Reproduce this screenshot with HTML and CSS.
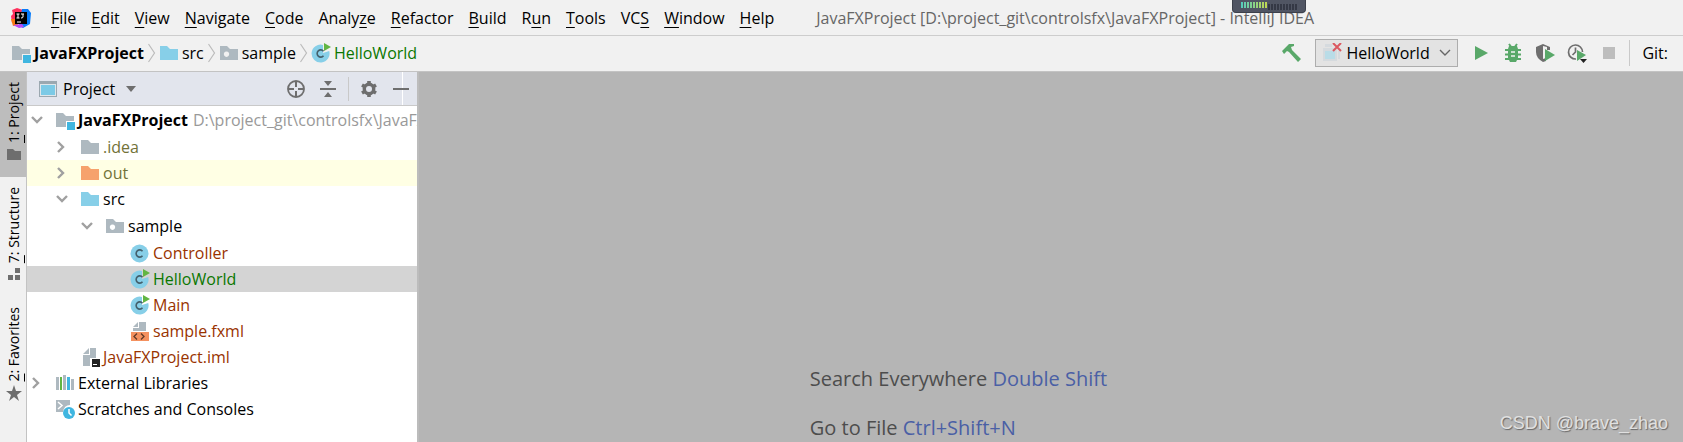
FILE: index.html
```html
<!DOCTYPE html>
<html lang="en">
<head>
    <meta charset="utf-8">
    <title>JavaFXProject - IntelliJ IDEA</title>
    <link rel="stylesheet" href="styles.css">
</head>
<body>
    <!-- shared icons -->
    <svg class="defs" aria-hidden="true">
        <symbol id="folder" viewBox="0 0 20 20"><path d="M1 3h7l3 3h8v11H1z"/></symbol>
        <symbol id="module" viewBox="0 0 20 20">
            <path fill="#aeb9c0" d="M1 3h7l3 3h8v5h-8v6H1z"/>
            <path fill="#40b6e0" d="M12 12h8v8h-8z"/>
        </symbol>
        <symbol id="package" viewBox="0 0 20 20">
            <path fill="#aeb9c0" fill-rule="evenodd" d="M1 3h7l3 3h8v11H1zM7.500 8.500a2.700 2.700 0 1 0 .01 0z"/>
        </symbol>
        <symbol id="class" viewBox="0 0 20 20">
            <circle cx="9.500" cy="10.500" r="9" fill="#87cfe8"/>
            <path d="M12.500 8.200A3.600 3.600 0 1 0 12.500 12.800" fill="none" stroke="#44606c" stroke-width="1.600"/>
        </symbol>
        <symbol id="runclass" viewBox="0 0 20 20">
            <path fill="#87cfe8" d="M12 1.900A9 9 0 1 0 18.200 8L12 10z"/>
            <path d="M12.500 8.200A3.600 3.600 0 1 0 12.500 12.800" fill="none" stroke="#44606c" stroke-width="1.600"/>
            <path fill="#62b543" d="M13 0l7 4-7 4z"/>
        </symbol>
        <symbol id="crumb" viewBox="0 0 8 20"><path d="M1 1l6 9-6 9" fill="none" stroke="#bcbcbc" stroke-width="1.200"/></symbol>
        <symbol id="open" viewBox="0 0 12 12"><path d="M1 3l5 5 5-5" fill="none" stroke="#a0a0a0" stroke-width="2.400"/></symbol>
        <symbol id="closed" viewBox="0 0 12 12"><path d="M2 1l5 5-5 5" fill="none" stroke="#a0a0a0" stroke-width="2.400"/></symbol>
    </svg>

    <header class="menubar">
        <svg class="logo" viewBox="0 0 20 20">
            <path fill="#fe315d" d="M1 2l5-2 6 2-4 8-7 5-1-7 2-2z"/>
            <path fill="#f97a12" d="M0 11l5 0 2 6-5 1z"/>
            <path fill="#087cfa" d="M11 1l6 0 3 4-1 11-7 4-4-2z"/>
            <path fill="#b74af7" d="M2 17l9-1 2 3-5 1z"/>
            <path d="M4 4h12v12H4z"/>
            <path d="M5.500 6h3M7 6v4M5.500 10h3M10 6h3M12 6v3q0 1-2 1M6 14h4" fill="none" stroke="#fff"/>
        </svg>
        <nav class="menu">
            <button><u>F</u>ile</button>
            <button><u>E</u>dit</button>
            <button><u>V</u>iew</button>
            <button><u>N</u>avigate</button>
            <button><u>C</u>ode</button>
            <button>Analy<u>z</u>e</button>
            <button><u>R</u>efactor</button>
            <button><u>B</u>uild</button>
            <button>R<u>u</u>n</button>
            <button><u>T</u>ools</button>
            <button>VC<u>S</u></button>
            <button><u>W</u>indow</button>
            <button><u>H</u>elp</button>
        </nav>
        <span class="window-title">JavaFXProject [D:\project_git\controlsfx\JavaFXProject] - IntelliJ IDEA</span>
        <div class="meter"><span class="level"></span><span class="rest"></span></div>
    </header>

    <div class="navbar">
        <div class="crumbs">
            <svg class="icon"><use href="#module"/></svg><b>JavaFXProject</b>
            <svg class="sep"><use href="#crumb"/></svg>
            <svg class="icon source"><use href="#folder"/></svg><span>src</span>
            <svg class="sep"><use href="#crumb"/></svg>
            <svg class="icon"><use href="#package"/></svg><span>sample</span>
            <svg class="sep"><use href="#crumb"/></svg>
            <svg class="icon"><use href="#runclass"/></svg><span class="added">HelloWorld</span>
        </div>
        <div class="actions">
            <button aria-label="Build"><svg class="icon" viewBox="0 0 20 20"><path fill="#59a869" d="M0 8l7-7h5v2l-3 1 1 3 9 9-3 3-9-10-2-1-3 3z"/></svg></button>
            <div class="config">
                <svg class="icon" viewBox="0 0 20 20">
                    <path fill="#d5dade" d="M3 1h7v3H3zM16 8h2v8h-2zM1 5h14v13H1z"/>
                    <path fill="#b9dce7" d="M3 8h10v8H3z"/>
                    <path d="M11 0l8 8M19 0l-8 8" stroke="#db5860" stroke-width="2"/>
                </svg>
                <select aria-label="Run configuration"><option>HelloWorld</option></select>
                <svg class="chevron" viewBox="0 0 12 12"><path d="M1 3l5 5 5-5" fill="none" stroke="#666" stroke-width="1.400"/></svg>
            </div>
            <button aria-label="Run"><svg class="icon" viewBox="0 0 20 20"><path fill="#59a869" d="M4 3l13 7-13 7z"/></svg></button>
            <button aria-label="Debug"><svg class="icon" viewBox="0 0 20 20">
                <path d="M6 1l3 4M14 1l-3 4M2 7h16M2 11.500h16M2 16h16" stroke="#59a869" stroke-width="2" fill="none"/>
                <path fill="#59a869" d="M6 3h8l1 3v9l-2 4H7l-2-4V6z"/>
                <path d="M8 9h4M8 13h4" stroke="#f1f1f1" stroke-width="1.600"/>
            </svg></button>
            <button aria-label="Run with coverage"><svg class="icon" viewBox="0 0 20 20">
                <path fill="#6e6e6e" d="M1 4l7-3 7 3v3h-3V4L8 3v13l3-1v3l-3 1q-7-4-7-10z"/>
                <path fill="#59a869" d="M10 6l10 6-10 6z"/>
            </svg></button>
            <button aria-label="Profile"><svg class="icon" viewBox="0 0 20 20">
                <path d="M9 16A7 7 0 1 1 15.500 9M8.500 4.500V9l-3 3" fill="none" stroke="#6e6e6e" stroke-width="1.700"/>
                <path fill="#59a869" d="M10 7l9 5-9 6z"/>
                <path fill="#222" d="M13 16h7l-3.500 4z"/>
            </svg></button>
            <button aria-label="Stop" disabled><svg class="icon" viewBox="0 0 20 20"><path fill="#bdbdbd" d="M4 4h12v12H4z"/></svg></button>
            <span class="git">Git:</span>
        </div>
    </div>

    <div class="workspace">
        <aside class="stripe">
            <button class="tab active">
                <span><u>1</u>: Project</span>
                <svg viewBox="0 0 16 16"><path fill="#6e6e6e" d="M1 3h6l2 2h6v9H1z"/></svg>
            </button>
            <button class="tab">
                <span><u>7</u>: Structure</span>
                <svg viewBox="0 0 16 16"><path fill="#6e6e6e" d="M9 2h5v5H9zM2 9h5v5H2zM9 9h5v5H9z"/></svg>
            </button>
            <button class="tab">
                <span><u>2</u>: Favorites</span>
                <svg viewBox="0 0 16 16"><path fill="#6e6e6e" d="M8 0l2 6h6l-5 4 2 6-5-4-5 4 2-6-5-4h6z"/></svg>
            </button>
        </aside>

        <section class="project">
            <div class="panel-head">
                <svg class="icon" viewBox="0 0 20 20"><path fill="#9ba8b0" d="M1 2h18v16H1z"/><path fill="#dfe6ea" d="M2 5h16v12H2z"/><path fill="#7ccae6" d="M3 6h14v10H3z"/></svg>
                <button class="view">Project <svg viewBox="0 0 12 12"><path fill="#6e6e6e" d="M1 3h10L6 9z"/></svg></button>
                <div class="tools">
                    <button aria-label="Locate"><svg class="icon" viewBox="0 0 20 20"><circle cx="10" cy="10" r="8" fill="none" stroke="#6e6e6e" stroke-width="1.800"/><path d="M10 2v6M10 12v6M2 10h6M12 10h6" stroke="#6e6e6e" stroke-width="2"/></svg></button>
                    <button aria-label="Collapse all"><svg class="icon" viewBox="0 0 20 20"><path fill="#6e6e6e" d="M2 9h16v2H2zM6 2h8l-4 5zM6 18h8l-4-5z"/></svg></button>
                    <i class="divider"></i>
                    <button aria-label="Settings"><svg class="icon" viewBox="0 0 20 20"><circle cx="10" cy="10" r="4.700" fill="none" stroke="#6e6e6e" stroke-width="3.400"/><path d="M10 2v3M10 15v3M3 6l3 1.700M14 12.300l3 1.700M3 14l3-1.700M14 7.700L17 6" stroke="#6e6e6e" stroke-width="3.600"/></svg></button>
                    <button class="hide" aria-label="Hide"><svg class="icon" viewBox="0 0 20 20"><path fill="#6e6e6e" d="M2 9h16v2H2z"/></svg></button>
                </div>
            </div>

            <ul class="tree">
                <li>
                    <div class="row"><svg class="arrow"><use href="#open"/></svg><svg class="icon"><use href="#module"/></svg><b>JavaFXProject</b><span class="path">D:\project_git\controlsfx\JavaFXProject</span></div>
                    <ul>
                        <li><div class="row l1 ignored"><svg class="arrow"><use href="#closed"/></svg><svg class="icon plain"><use href="#folder"/></svg>.idea</div></li>
                        <li><div class="row l1 ignored excluded"><svg class="arrow"><use href="#closed"/></svg><svg class="icon orange"><use href="#folder"/></svg>out</div></li>
                        <li>
                            <div class="row l1"><svg class="arrow"><use href="#open"/></svg><svg class="icon source"><use href="#folder"/></svg>src</div>
                            <ul>
                                <li>
                                    <div class="row l2"><svg class="arrow"><use href="#open"/></svg><svg class="icon"><use href="#package"/></svg>sample</div>
                                    <ul>
                                        <li><div class="row l3 unversioned"><svg class="arrow"></svg><svg class="icon"><use href="#class"/></svg>Controller</div></li>
                                        <li><div class="row l3 added selected"><svg class="arrow"></svg><svg class="icon"><use href="#runclass"/></svg>HelloWorld</div></li>
                                        <li><div class="row l3 unversioned"><svg class="arrow"></svg><svg class="icon"><use href="#runclass"/></svg>Main</div></li>
                                        <li><div class="row l3 unversioned"><svg class="arrow"></svg><svg class="icon" viewBox="0 0 20 20"><path fill="#aeb9c0" d="M9 1h7v9H3V7h6z"/><path fill="#aeb9c0" d="M3 6l5-5v5z"/><path fill="#f4915f" d="M1 11h18v9H1z"/><path d="M7 12.500l-3 3 3 3M11 12.500l3 3-3 3" fill="none" stroke="#5f3a28" stroke-width="1.300"/></svg>sample.fxml</div></li>
                                    </ul>
                                </li>
                            </ul>
                        </li>
                        <li><div class="row l1 unversioned"><svg class="arrow"></svg><svg class="icon" viewBox="0 0 20 20"><path fill="#aeb9c0" d="M10 1h6v10h-6v8H3V8h7zM3 7l6-6v6z"/><path fill="#222" d="M12 12h8v8h-8z"/><path fill="#fff" d="M13 17h4v1h-4z"/></svg>JavaFXProject.iml</div></li>
                    </ul>
                </li>
                <li><div class="row"><svg class="arrow"><use href="#closed"/></svg><svg class="icon" viewBox="0 0 20 20"><path fill="#aeb9c0" d="M1 4h3v13H1zM8 2h3v15H8zM16 6h3v11h-3z"/><path fill="#62b543" d="M5 4h2v13H5z"/><path fill="#40b6e0" d="M12 4h3v13h-3z"/></svg>External Libraries</div></li>
                <li><div class="row"><svg class="arrow"></svg><svg class="icon" viewBox="0 0 20 20"><path fill="#aeb9c0" d="M1 1h14v5q-6 0-7 7H1z"/><path d="M3 3l4 3.500L3 10" fill="none" stroke="#fff" stroke-width="1.500"/><circle cx="14" cy="14" r="6" fill="#40b6e0"/><path d="M14 10v4l2.500 2.500" fill="none" stroke="#fff" stroke-width="1.500"/></svg>Scratches and Consoles</div></li>
            </ul>
        </section>

        <main class="editor">
            <div class="hints">
                <p>Search Everywhere <kbd>Double Shift</kbd></p>
                <p>Go to File <kbd>Ctrl+Shift+N</kbd></p>
            </div>
            <span class="watermark">CSDN @brave_zhao</span>
        </main>
    </div>
</body>
</html>
```
FILE: styles.css
```css
*{
    box-sizing: border-box;
}
body{
    margin: 0;
    height: 100vh;
    overflow: hidden;
    display: flex;
    flex-direction: column;
    background-color: #f1f1f1;
    color: #000;
    font: 16px/26px "Open Sans", "Noto Sans", sans-serif;
}
button{
    padding: 0;
    border: none;
    background: none;
    color: inherit;
    font: inherit;
}
button svg{
    display: block;
}
u{
    text-underline-offset: 3px;
    text-decoration-thickness: 1px;
    text-decoration-skip-ink: none;
}
.defs{
    position: absolute;
    width: 0;
    height: 0;
}
.icon{
    width: 20px;
    height: 20px;
    flex: none;
}

/* menu */
.menubar{
    position: relative;
    display: flex;
    align-items: center;
    height: 36px;
    flex: none;
    padding-left: 11px;
    border-bottom: 1px solid #cdcdcd;
    white-space: nowrap;
}
.logo{
    width: 20px;
    height: 20px;
    margin-right: 20px;
}
.menu{
    display: flex;
    gap: 15px;
}
.window-title{
    margin-left: 42px;
    color: #666;
}
.meter{
    position: absolute;
    top: 0;
    left: 1232px;
    width: 74px;
    height: 13px;
    padding: 2px 8px;
    display: flex;
    background-color: #505563;
    border: 1px solid #3c404b;
    border-top: none;
    border-radius: 0 0 4px 4px;
}
.meter span{
    height: 6px;
}
.level{
    width: 27px;
    background: repeating-linear-gradient(90deg, transparent 0 2px, #505563 2px 3px), linear-gradient(90deg, #55cdbd, #c4d84c);
}
.rest{
    width: 30px;
    margin-top: 2px;
    background: repeating-linear-gradient(90deg, #343845 0 2px, #505563 2px 3px);
}

/* navigation bar */
.navbar{
    display: flex;
    align-items: center;
    justify-content: space-between;
    height: 36px;
    flex: none;
    padding: 0 15px 1px 11px;
    border-bottom: 1px solid #c3c3c3;
}
.crumbs{
    display: flex;
    align-items: center;
    gap: 3px;
}
.sep{
    width: 9px;
    height: 20px;
}
.actions{
    display: flex;
    align-items: center;
    gap: 12px;
}
.config{
    display: flex;
    align-items: center;
    width: 143px;
    height: 28px;
    margin: 0 1px;
    padding: 0 6px;
    background-color: #e3e3e3;
    border: 1px solid #adadad;
}
.config select{
    flex: 1;
    min-width: 0;
    margin-left: 4px;
    padding: 0;
    border: none;
    background: none;
    appearance: none;
    color: inherit;
    font: inherit;
}
.chevron{
    width: 12px;
    height: 12px;
    pointer-events: none;
}
.git{
    margin-left: -2px;
    padding-left: 12px;
    border-left: 1px solid #c9c9c9;
}

/* tool windows */
.workspace{
    flex: 1;
    min-height: 0;
    display: flex;
}
.stripe{
    width: 27px;
    flex: none;
    border-right: 1px solid #c3c3c3;
    font-size: 14px;
}
.tab{
    display: flex;
    flex-direction: column;
    align-items: center;
    gap: 3px;
    width: 26px;
    padding: 10px 0 15px 2px;
    line-height: 20px;
}
.tab.active{
    background-color: #bdbdbd;
}
.tab span{
    writing-mode: vertical-rl;
    transform: rotate(180deg);
}
.tab svg{
    width: 16px;
    height: 16px;
}
.project{
    width: 392px;
    flex: none;
    overflow: hidden;
    background-color: #fff;
    border-right: 2px solid #bcbcbc;
}
.panel-head{
    display: flex;
    align-items: center;
    height: 34px;
    padding: 0 6px 0 11px;
    background-color: #e2e5ed;
    border-bottom: 1px solid #c9c9c9;
}
.view{
    display: flex;
    align-items: center;
    gap: 10px;
    margin-left: 5px;
}
.view svg{
    width: 12px;
    height: 12px;
}
.tools{
    display: flex;
    align-items: center;
    gap: 12px;
    height: 100%;
    margin-left: auto;
}
.divider{
    height: 24px;
    margin: 0 -2px;
    border-left: 1px solid #c9c9c9;
}
.hide{
    position: relative;
    height: 100%;
}
.hide svg{
    position: relative;
    z-index: 1;
}
.hide::after{
    content: "";
    position: absolute;
    top: 0;
    bottom: 0;
    left: 11px;
    border-left: 1px solid #fff;
}

/* project tree */
.tree, .tree ul{
    margin: 0;
    padding: 1px 0 0;
    list-style: none;
}
.row{
    display: flex;
    align-items: center;
    height: 26px;
    white-space: nowrap;
}
.row .icon{
    margin-right: 3px;
}
.l1{
    padding-left: 25px;
}
.l2{
    padding-left: 50px;
}
.l3{
    padding-left: 75px;
}
.arrow{
    width: 12px;
    height: 12px;
    margin: 0 12px 0 4px;
    flex: none;
}
.path{
    margin-left: 5px;
    color: #999;
}
.plain{
    fill: #aeb9c0;
}
.orange{
    fill: #f6a26c;
}
.source{
    fill: #87cfe8;
}
.ignored{
    color: #727238;
}
.added{
    color: #0a7700;
}
.unversioned{
    color: #993300;
}
.excluded{
    background-color: #ffffe4;
}
.selected{
    background-color: #d4d4d4;
}

/* empty editor */
.editor{
    position: relative;
    flex: 1;
    display: flex;
    justify-content: center;
    align-items: flex-end;
    padding-right: 11%;
    background-color: #b5b5b5;
    color: #4d4d4d;
    font-size: 20px;
    line-height: 28px;
}
.hints{
    display: grid;
    gap: 21px;
}
.hints p{
    margin: 0;
}
.hints kbd{
    font: inherit;
    color: #4a5fa5;
}
.watermark{
    position: absolute;
    right: 15px;
    bottom: 5px;
    color: #e0e0e0;
    font-family: "Liberation Sans", Arial, sans-serif;
    font-size: 18px;
    text-shadow: 1px 1px 1px #666;
}
```
